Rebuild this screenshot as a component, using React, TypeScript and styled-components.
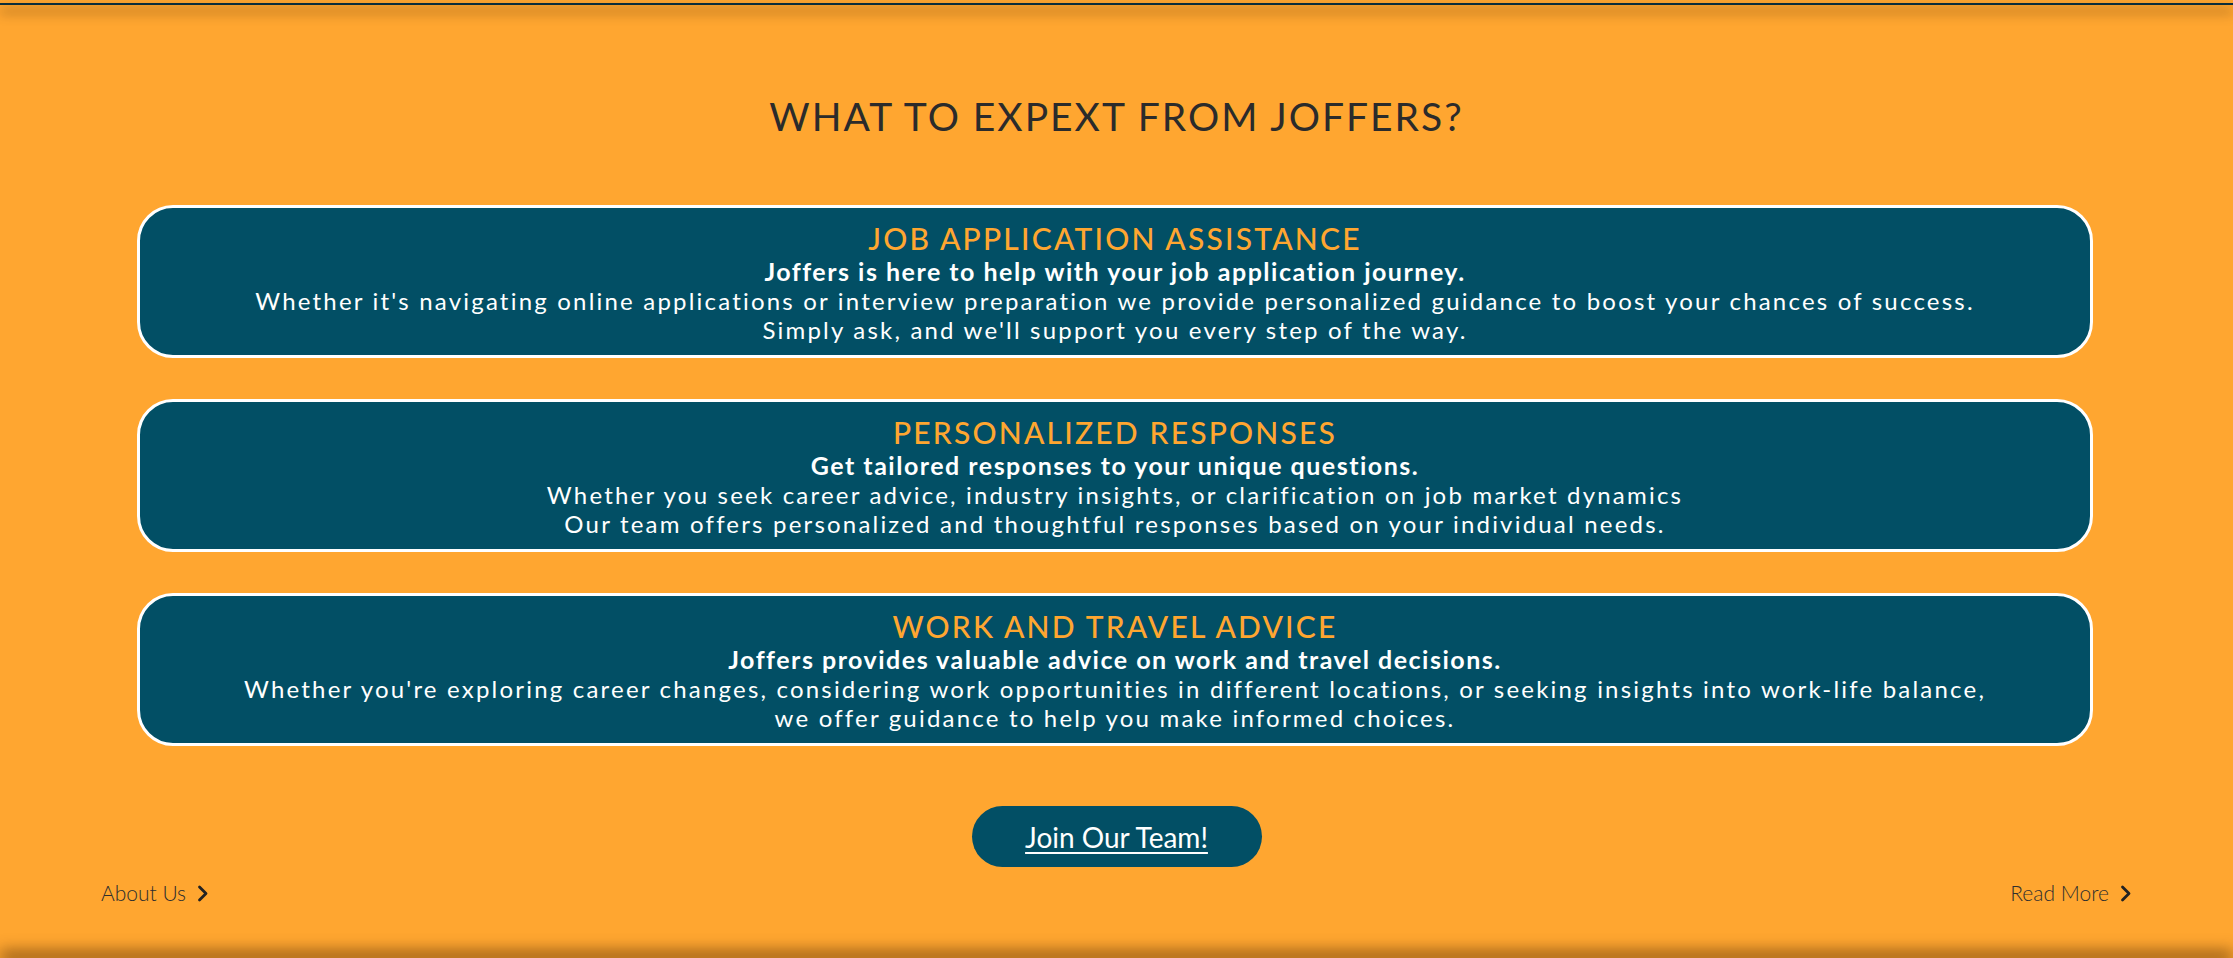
import styled, { createGlobalStyle } from 'styled-components';

const GlobalStyle = createGlobalStyle`
  html, body {
    margin: 0;
    padding: 0;
    background-color: #ffa630;
  }

  body {
    font-family: Lato, "Open Sans", sans-serif;
  }
`;

const Page = styled.div`
  height: 100vh;
  background-color: #ffa630;
  display: flex;
  flex-direction: column;
  overflow: hidden;
`;

const TopEdge = styled.div`
  margin-top: 3px;
  height: 2px;
  background-color: #0c2e3b;
  box-shadow: 0 7px 12px rgba(30, 15, 0, 0.8);
  position: relative;
  z-index: 1;
  flex-shrink: 0;
`;

const Section = styled.section`
  flex: 1;
  display: flex;
  flex-direction: column;
  align-items: center;
  padding-top: 87px;
`;

const Heading = styled.h2`
  margin: 0 0 65px;
  font-size: 39px;
  line-height: 48px;
  font-weight: 400;
  letter-spacing: 2px;
  color: #2b2b2b;
`;

const CardList = styled.div`
  align-self: stretch;
  margin: 0 140px 0 137px;
  display: flex;
  flex-direction: column;
  gap: 41px;
`;

const Card = styled.div`
  background-color: #024f65;
  border: 3px solid #ffffff;
  border-radius: 36px;
  padding: 12px 20px 11px;
  text-align: center;
  color: #ffffff;
`;

const CardTitle = styled.h3`
  margin: 0;
  font-size: 30px;
  line-height: 36px;
  font-weight: 500;
  letter-spacing: 2.2px;
  color: #ffa630;
`;

const CardLead = styled.p`
  margin: 0;
  font-size: 25px;
  line-height: 30px;
  font-weight: 700;
  letter-spacing: 1.5px;
`;

const CardText = styled.p`
  margin: 0;
  font-size: 24px;
  line-height: 29px;
  font-weight: 400;
  letter-spacing: 2.2px;
`;

const JoinButton = styled.a`
  margin-top: 60px;
  width: 290px;
  height: 61px;
  border-radius: 31px;
  background-color: #024f65;
  display: flex;
  align-items: center;
  justify-content: center;
  color: #ffffff;
  font-size: 28px;
  text-decoration: underline;
  text-underline-offset: 4px;
  text-decoration-thickness: 2px;
  cursor: pointer;
`;

const LinkRow = styled.div`
  align-self: stretch;
  margin-top: 13px;
  padding: 0 101px;
  display: flex;
  justify-content: space-between;
  align-items: center;
`;

const MoreLink = styled.a`
  display: flex;
  align-items: center;
  gap: 11px;
  font-size: 21px;
  line-height: 26px;
  font-weight: 300;
  color: #2e2e2e;
  cursor: pointer;
`;

const BottomEdge = styled.div`
  height: 10px;
  margin-bottom: -10px;
  flex-shrink: 0;
  background-color: #6b4310;
  box-shadow: 0 -6px 16px rgba(60, 30, 0, 0.7);
`;

interface IFeature {
  id: number;
  title: string;
  lead: string;
  lines: string[];
}

const features: IFeature[] = [
  {
    id: 1,
    title: 'JOB APPLICATION ASSISTANCE',
    lead: 'Joffers is here to help with your job application journey.',
    lines: [
      "Whether it's navigating online applications or interview preparation we provide personalized guidance to boost your chances of success.",
      "Simply ask, and we'll support you every step of the way.",
    ],
  },
  {
    id: 2,
    title: 'PERSONALIZED RESPONSES',
    lead: 'Get tailored responses to your unique questions.',
    lines: [
      'Whether you seek career advice, industry insights, or clarification on job market dynamics',
      'Our team offers personalized and thoughtful responses based on your individual needs.',
    ],
  },
  {
    id: 3,
    title: 'WORK AND TRAVEL ADVICE',
    lead: 'Joffers provides valuable advice on work and travel decisions.',
    lines: [
      "Whether you're exploring career changes, considering work opportunities in different locations, or seeking insights into work-life balance,",
      'we offer guidance to help you make informed choices.',
    ],
  },
];

function Chevron() {
  return (
    <svg width="12" height="17" viewBox="0 0 12 17">
      <polyline
        points="2.5,2 9,8.5 2.5,15"
        fill="none"
        stroke="#222222"
        strokeWidth="2.8"
        strokeLinecap="round"
        strokeLinejoin="round"
      />
    </svg>
  );
}

export default function App() {
  return (
    <Page>
      <GlobalStyle />
      <TopEdge />
      <Section>
        <Heading>WHAT TO EXPEXT FROM JOFFERS?</Heading>

        <CardList>
          {features.map((feature) => (
            <Card key={feature.id}>
              <CardTitle>{feature.title}</CardTitle>
              <CardLead>{feature.lead}</CardLead>
              {feature.lines.map((line) => (
                <CardText key={line}>{line}</CardText>
              ))}
            </Card>
          ))}
        </CardList>

        <JoinButton>Join Our Team!</JoinButton>

        <LinkRow>
          <MoreLink>
            About Us <Chevron />
          </MoreLink>
          <MoreLink>
            Read More <Chevron />
          </MoreLink>
        </LinkRow>
      </Section>
      <BottomEdge />
    </Page>
  );
}
